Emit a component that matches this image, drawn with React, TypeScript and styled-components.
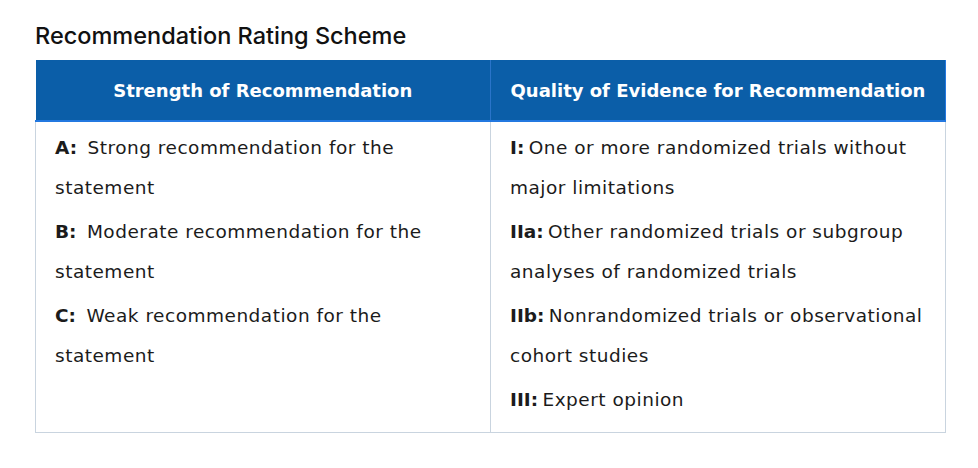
import React from 'react';
import styled, { createGlobalStyle } from 'styled-components';

const GlobalStyle = createGlobalStyle`
  body {
    margin: 0;
    background: #ffffff;
    font-family: "DejaVu Sans", "Noto Sans", Arial, sans-serif;
    color: #1b1b1b;
  }
`;

const strength = [
  { key: 'A:', text: 'Strong recommendation for the statement' },
  { key: 'B:', text: 'Moderate recommendation for the statement' },
  { key: 'C:', text: 'Weak recommendation for the statement' },
];

const quality = [
  { key: 'I:', text: 'One or more randomized trials without major limitations' },
  { key: 'IIa:', text: 'Other randomized trials or subgroup analyses of randomized trials' },
  { key: 'IIb:', text: 'Nonrandomized trials or observational cohort studies' },
  { key: 'III:', text: 'Expert opinion' },
];

export default function App() {
  return (
    <>
      <GlobalStyle />
      <Page>
        <Heading>Recommendation Rating Scheme</Heading>
        <Table>
          <thead>
            <tr>
              <Th>Strength of Recommendation</Th>
              <Th $last>Quality of Evidence for Recommendation</Th>
            </tr>
          </thead>
          <tbody>
            <tr>
              <Td>
                {strength.map((s) => (
                  <Item key={s.key}>
                    <Key $gap={4}>{s.key}</Key> {s.text}
                  </Item>
                ))}
              </Td>
              <Td>
                {quality.map((q) => (
                  <Item key={q.key}>
                    <Key $gap={-2}>{q.key}</Key> {q.text}
                  </Item>
                ))}
              </Td>
            </tr>
          </tbody>
        </Table>
      </Page>
    </>
  );
}

const Page = styled.div`
  padding: 22px 32px 0 35px;
`;

const Heading = styled.h2`
  margin: 0 0 10px 0;
  font-family: Inter, "Noto Sans", sans-serif;
  font-size: 23.5px;
  font-weight: 500;
  line-height: 28px;
  color: #111;
`;

const Table = styled.table`
  width: 911px;
  border-collapse: collapse;
  table-layout: fixed;
`;

const Th = styled.th<{ $last?: boolean }>`
  height: 60px;
  padding: 0 12px;
  background: #0b5ea8;
  color: #ffffff;
  font-size: 18px;
  font-weight: 700;
  text-align: center;
  border-bottom: 2px solid #2378e0;
  border-right: 1px solid ${({ $last }) => ($last ? '#2378e0' : '#2a74c9')};
`;

const Td = styled.td`
  vertical-align: top;
  padding: 6px 19px 8px 19px;
  border: 1px solid #c9d4df;
  border-top: none;
`;

const Item = styled.p`
  margin: 0 0 4px 0;
  font-size: 18.5px;
  letter-spacing: 0.5px;
  line-height: 40px;
  color: #1b1b1b;
`;

const Key = styled.b<{ $gap: number }>`
  font-weight: 700;
  letter-spacing: 0;
  margin-right: ${({ $gap }) => $gap}px;
`;
